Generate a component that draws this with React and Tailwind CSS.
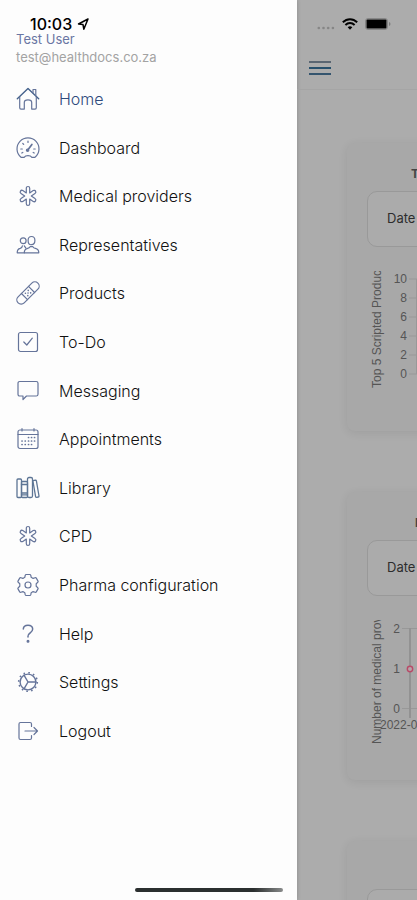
import React from "react";

const Icon = ({ children }) => (
  <svg
    viewBox="0 0 24 24"
    className="w-6 h-6 shrink-0 text-[#65749a]"
    fill="none"
    stroke="currentColor"
    strokeWidth="1.2"
    strokeLinecap="round"
    strokeLinejoin="round"
    aria-hidden="true"
  >
    {children}
  </svg>
);

const HomeIcon = () => (
  <Icon>
    <path d="M1.300 11.800 12 1.600l10.700 10.200" stroke="#45628c" strokeWidth="1.400" />
    <path d="M3.700 10v10.800q0 1.300 1.300 1.300h3.300v-6.600q0-2.600 3.700-2.600t3.700 2.600v6.600H19q1.300 0 1.300-1.300V10" />
    <path d="M17 5.800V2.500h2.800v6" />
  </Icon>
);

const DashboardIcon = () => (
  <Icon>
    <path d="M5 21.300h3.100q1.200-1.600 3.900-1.600t3.900 1.600H19A11 11 0 1 0 5 21.300Z" />
    <path d="m11.600 14.300 4.300-5.800" strokeWidth="1.700" />
    <circle cx="11.600" cy="14.200" r="1.200" />
    <path d="M12 5v1.500M6.800 7.500l.9.900M4.800 13h1.500M5.800 17l1-.6M19.200 13h-1.500M18.200 17l-1-.6" />
  </Icon>
);

const MedicalIcon = () => (
  <Icon>
    <path d="M10.300 8.900V4.200a1.700 1.700 0 0 1 3.400 0v4.700l3.500-2.300a1.700 1.700 0 0 1 1.800 2.900L15.300 12l3.700 2.500a1.700 1.700 0 0 1-1.800 2.900l-3.500-2.300v4.700a1.700 1.700 0 0 1-3.400 0v-4.700l-3.500 2.300a1.700 1.700 0 0 1-1.800-2.900L8.700 12 5 9.500a1.700 1.700 0 0 1 1.800-2.900Z" />
  </Icon>
);

const PeopleIcon = () => (
  <Icon>
    <circle cx="7.200" cy="7.800" r="2.900" />
    <path d="M12.100 7.400q0-3.900 3.400-3.900t3.400 3.900-3.400 4.300-3.400-4.300Z" />
    <path d="M8.300 19.800q-.2-3.700 3.400-4.500 1.700-.2 2.400-1.600h2.800q.7 1.400 2.500 1.700 3.500.8 3.400 4.400Z" />
    <path d="M8.300 19.800H1.200q-.1-3.800 3-4.500 1.900-.5 2.200-2.500M8.300 12.800l1.600 2.300" />
  </Icon>
);

const BandageIcon = () => (
  <Icon>
    <g transform="rotate(-45 12 12)">
      <rect x="-2" y="7.700" width="28" height="8.600" rx="4.300" />
      <path d="M7 7.700v8.600M17 7.700v8.600" />
      <path d="M10 10.300v.1M12 12v.1M14 10.300v.1M10 13.700v.1M14 13.700v.1" strokeWidth="1.500" />
    </g>
  </Icon>
);

const TodoIcon = () => (
  <Icon>
    <rect x="2.500" y="2.500" width="19" height="19" rx="2" />
    <path d="m7.800 12 3 3 5.500-6.800" />
  </Icon>
);

const MessageIcon = () => (
  <Icon>
    <path d="M3.800 2.500h16.400q1.800 0 1.800 1.800v10.900q0 1.800-1.800 1.800h-9.700L7 20.500V17H3.800Q2 17 2 15.200V4.300q0-1.800 1.800-1.800Z" />
  </Icon>
);

const CalendarIcon = () => (
  <Icon>
    <rect x="2" y="3" width="20" height="18.500" rx="2" />
    <path d="M2 7.500h20M6 1.700V4M18 1.700V4" />
    <path
      d="M12.500 10.500h.1M15.500 10.500h.1M18.500 10.500h.1M6 14h.1M9.200 14h.1M12.500 14h.1M15.500 14h.1M18.500 14h.1M6 17.500h.1M9.200 17.500h.1M12.500 17.500h.1M15.500 17.500h.1"
      strokeWidth="1.700"
    />
  </Icon>
);

const LibraryIcon = () => (
  <Icon>
    <g stroke="#5d7595" strokeWidth="1.300">
      <rect x="1" y="3" width="4.500" height="18.500" rx="1" />
      <rect x="5.500" y="5.500" width="6" height="16" rx="1" />
      <path d="M5.500 8.500h6M5.500 17h6M5.500 18.800h6" />
      <rect x="11.500" y="1.500" width="5" height="20" rx="1.500" />
      <path d="m17 4.700 2.400-.5q.8-.1 1 .7L23 20q.1.900-.7 1l-1.600.3q-.9.100-1.100-.7L17 5.500" />
    </g>
  </Icon>
);

const GearIcon = () => (
  <Icon>
    <path d="M10.200 1.500h3.600q.8 0 1 .8l.4 2 1.900 1.100 2-.7q.8-.3 1.200.4l1.700 3q.4.700-.2 1.200L20.200 10.700v2.600l1.600 1.400q.6.500.2 1.200l-1.700 3q-.4.700-1.200.4l-2-.7-1.900 1.100-.4 2q-.2.800-1 .8h-3.600q-.8 0-1-.8l-.4-2-1.900-1.100-2 .7q-.8.300-1.200-.4l-1.700-3q-.4-.7.200-1.200l1.600-1.400v-2.600L2.200 9.300q-.6-.5-.2-1.200l1.700-3q.4-.7 1.200-.4l2 .7 1.900-1.100.4-2q.2-.8 1-.8Z" />
    <circle cx="12" cy="12" r="3" />
  </Icon>
);

const HelpIcon = () => (
  <Icon>
    <path d="M7.300 7q.2-3.800 4.700-3.800T16.700 7q0 2-2.500 3.900T12 14v1" strokeWidth="1.500" />
    <circle cx="12" cy="19.300" r=".9" fill="currentColor" />
  </Icon>
);

const SettingsIcon = () => (
  <Icon>
    <circle cx="12" cy="12" r="7.900" strokeWidth="1.400" />
    <circle cx="12" cy="12" r="9.300" strokeWidth="1.600" strokeDasharray="1.600 3.270" strokeLinecap="butt" />
    <path d="M12 12h7.900M12 12 8 5.200M12 12 8 18.800" strokeWidth="1.400" />
  </Icon>
);

const LogoutIcon = () => (
  <Icon>
    <path d="M15.500 7.500V5q0-1.500-1.500-1.500H4.500Q3 3.500 3 5v14q0 1.500 1.500 1.500H14q1.500 0 1.500-1.500v-2.500" />
    <path d="M9 12h12.500M18 8.500l3.500 3.500-3.500 3.500" />
  </Icon>
);

const menu = [
  { label: "Home", icon: HomeIcon, active: true },
  { label: "Dashboard", icon: DashboardIcon },
  { label: "Medical providers", icon: MedicalIcon },
  { label: "Representatives", icon: PeopleIcon },
  { label: "Products", icon: BandageIcon },
  { label: "To-Do", icon: TodoIcon },
  { label: "Messaging", icon: MessageIcon },
  { label: "Appointments", icon: CalendarIcon },
  { label: "Library", icon: LibraryIcon },
  { label: "CPD", icon: MedicalIcon },
  { label: "Pharma configuration", icon: GearIcon },
  { label: "Help", icon: HelpIcon },
  { label: "Settings", icon: SettingsIcon },
  { label: "Logout", icon: LogoutIcon },
];

const StatusBar = () => (
  <div className="absolute inset-x-0 top-0 flex h-12 items-center justify-between pl-[30px] pr-[26px] text-black">
    <div className="flex items-center gap-1">
      <span className="text-base font-medium">10:03</span>
      <svg viewBox="0 0 14 14" className="w-[14px] h-[14px]" fill="none" stroke="currentColor" strokeWidth="1.500" strokeLinejoin="round">
        <path d="M12 2 2.500 7l4.500.6.800 4.600Z" />
      </svg>
    </div>
    <div className="flex items-center gap-[7px]">
      <svg viewBox="0 0 18 14" className="w-[18px] h-[14px]" fill="#868686">
        <circle cx="1.800" cy="11" r="1.300" />
        <circle cx="6.500" cy="11" r="1.300" />
        <circle cx="11.200" cy="11" r="1.300" />
        <circle cx="15.900" cy="11" r="1.300" />
      </svg>
      <svg viewBox="0 0 16 12" className="w-4 h-3" fill="none" stroke="currentColor" strokeWidth="1.900">
        <path d="M.8 4.300Q4 1.200 8 1.200t7.200 3.100M3.400 7Q5.400 5 8 5t4.600 2" />
        <path d="M8 11.800 5.700 9.300Q8 7.400 10.300 9.300Z" fill="currentColor" stroke="none" />
      </svg>
      <svg viewBox="0 0 26 12" className="w-[26px] h-3">
        <rect x=".5" y=".5" width="22" height="11" rx="2.500" fill="none" stroke="#868686" />
        <rect x="1.500" y="1.500" width="20" height="9" rx="1" fill="currentColor" />
        <path d="M24 4v4q1.500-.5 1.500-2T24 4Z" fill="#7c7c7c" />
      </svg>
    </div>
  </div>
);

const Drawer = () => (
  <aside className="flex w-[297px] shrink-0 flex-col bg-[#fdfdfd] px-4 pt-[30px] shadow-[0_0_4px_rgba(0,0,0,0.2)]">
    <p className="text-[13px] leading-[18px] text-[#6a76a3]">Test User</p>
    <p className="text-[13px] leading-[18px] text-[#a3a3a3]">test@healthdocs.co.za</p>
    <nav className="mt-[21px]">
      <ul className="flex h-[656px] flex-col justify-between">
        {menu.map(({ label, icon: ItemIcon, active }) => (
          <li key={label}>
            <a
              href="#"
              className={`flex h-6 items-center gap-[19px] text-base font-light ${active ? "text-[#2f4a7c]" : "text-[#111]"}`}
            >
              <ItemIcon />
              {label}
            </a>
          </li>
        ))}
      </ul>
    </nav>
  </aside>
);

const ProductsChart = () => (
  <svg width="280" height="138" className="block overflow-hidden font-['Liberation_Sans',sans-serif] text-xs" fill="#555">
    <text transform="translate(14 117) rotate(-90)">Top 5 Scripted Products</text>
    {[10, 8, 6, 4, 2, 0].map((value, i) => (
      <g key={value}>
        <text x="40" y={12 + i * 19} textAnchor="end">{value}</text>
        <path d={`M42 ${8 + i * 19}H280`} stroke="#989898" />
      </g>
    ))}
    <path d="M49.500 8v95" stroke="#989898" />
  </svg>
);

const ProvidersChart = () => (
  <svg width="280" height="138" className="block overflow-hidden font-['Liberation_Sans',sans-serif] text-xs" fill="#555">
    <text transform="translate(14 124) rotate(-90)">Number of medical providers</text>
    {[2, 1, 0].map((value, i) => (
      <text key={value} x="33" y={13 + i * 40} textAnchor="end">{value}</text>
    ))}
    <path d="M35 8.500H280M35 88.500H280" stroke="#989898" />
    <path d="M43 8v90" stroke="#929292" strokeWidth="2" />
    <circle cx="43" cy="49" r="2.700" fill="#b5a5a9" stroke="#b84a68" strokeWidth="1.400" />
    <text x="13" y="109">2022-01</text>
  </svg>
);

const ChartCard = ({ title, titleClass, children }) => (
  <section className="h-[288px] w-[320px] rounded-lg bg-[#a8a8a8] pl-5 pt-5 shadow-[0_2px_10px_rgba(0,0,0,0.08)]">
    <h2 className={`whitespace-nowrap text-xs leading-[22px] font-bold text-[#444] ${titleClass}`}>{title}</h2>
    <button
      type="button"
      className="mt-[6px] flex h-14 w-[280px] items-center rounded-[10px] border border-[#999] bg-[#ababab] pl-[19px] text-[13px] text-[#2d2d2d]"
    >
      Date
    </button>
    <div className="mt-6">{children}</div>
  </section>
);

const App = () => {
  return (
    <div className="relative flex h-screen overflow-hidden bg-[#acacac] font-['Inter','Liberation_Sans',sans-serif]">
      <Drawer />
      <main className="min-w-0 flex-1 overflow-hidden">
        <div className="flex h-[90px] items-end border-b border-[#a5a5a5] pb-[14px] pl-3">
          <button type="button" aria-label="Menu" className="flex flex-col gap-1">
            <span className="h-[2px] w-[22px] bg-[#5a6672]" />
            <span className="h-[2px] w-[22px] bg-[#27506c]" />
            <span className="h-[2px] w-[22px] bg-[#34546e]" />
          </button>
        </div>
        <div className="flex flex-col gap-[61px] pl-[50px] pt-[53px]">
          <ChartCard title="Top 5 Scripted Products" titleClass="pl-11">
            <ProductsChart />
          </ChartCard>
          <ChartCard title="Medical providers" titleClass="pl-12">
            <ProvidersChart />
          </ChartCard>
          <ChartCard title="" titleClass="h-[22px]" />
        </div>
      </main>
      <StatusBar />
      <div className="absolute bottom-2 left-1/2 h-1 w-[148px] -translate-x-1/2 rounded-full bg-linear-to-r from-[#2b2f2f] from-80% to-[#8a8c8c]" />
    </div>
  );
};

export default App;
